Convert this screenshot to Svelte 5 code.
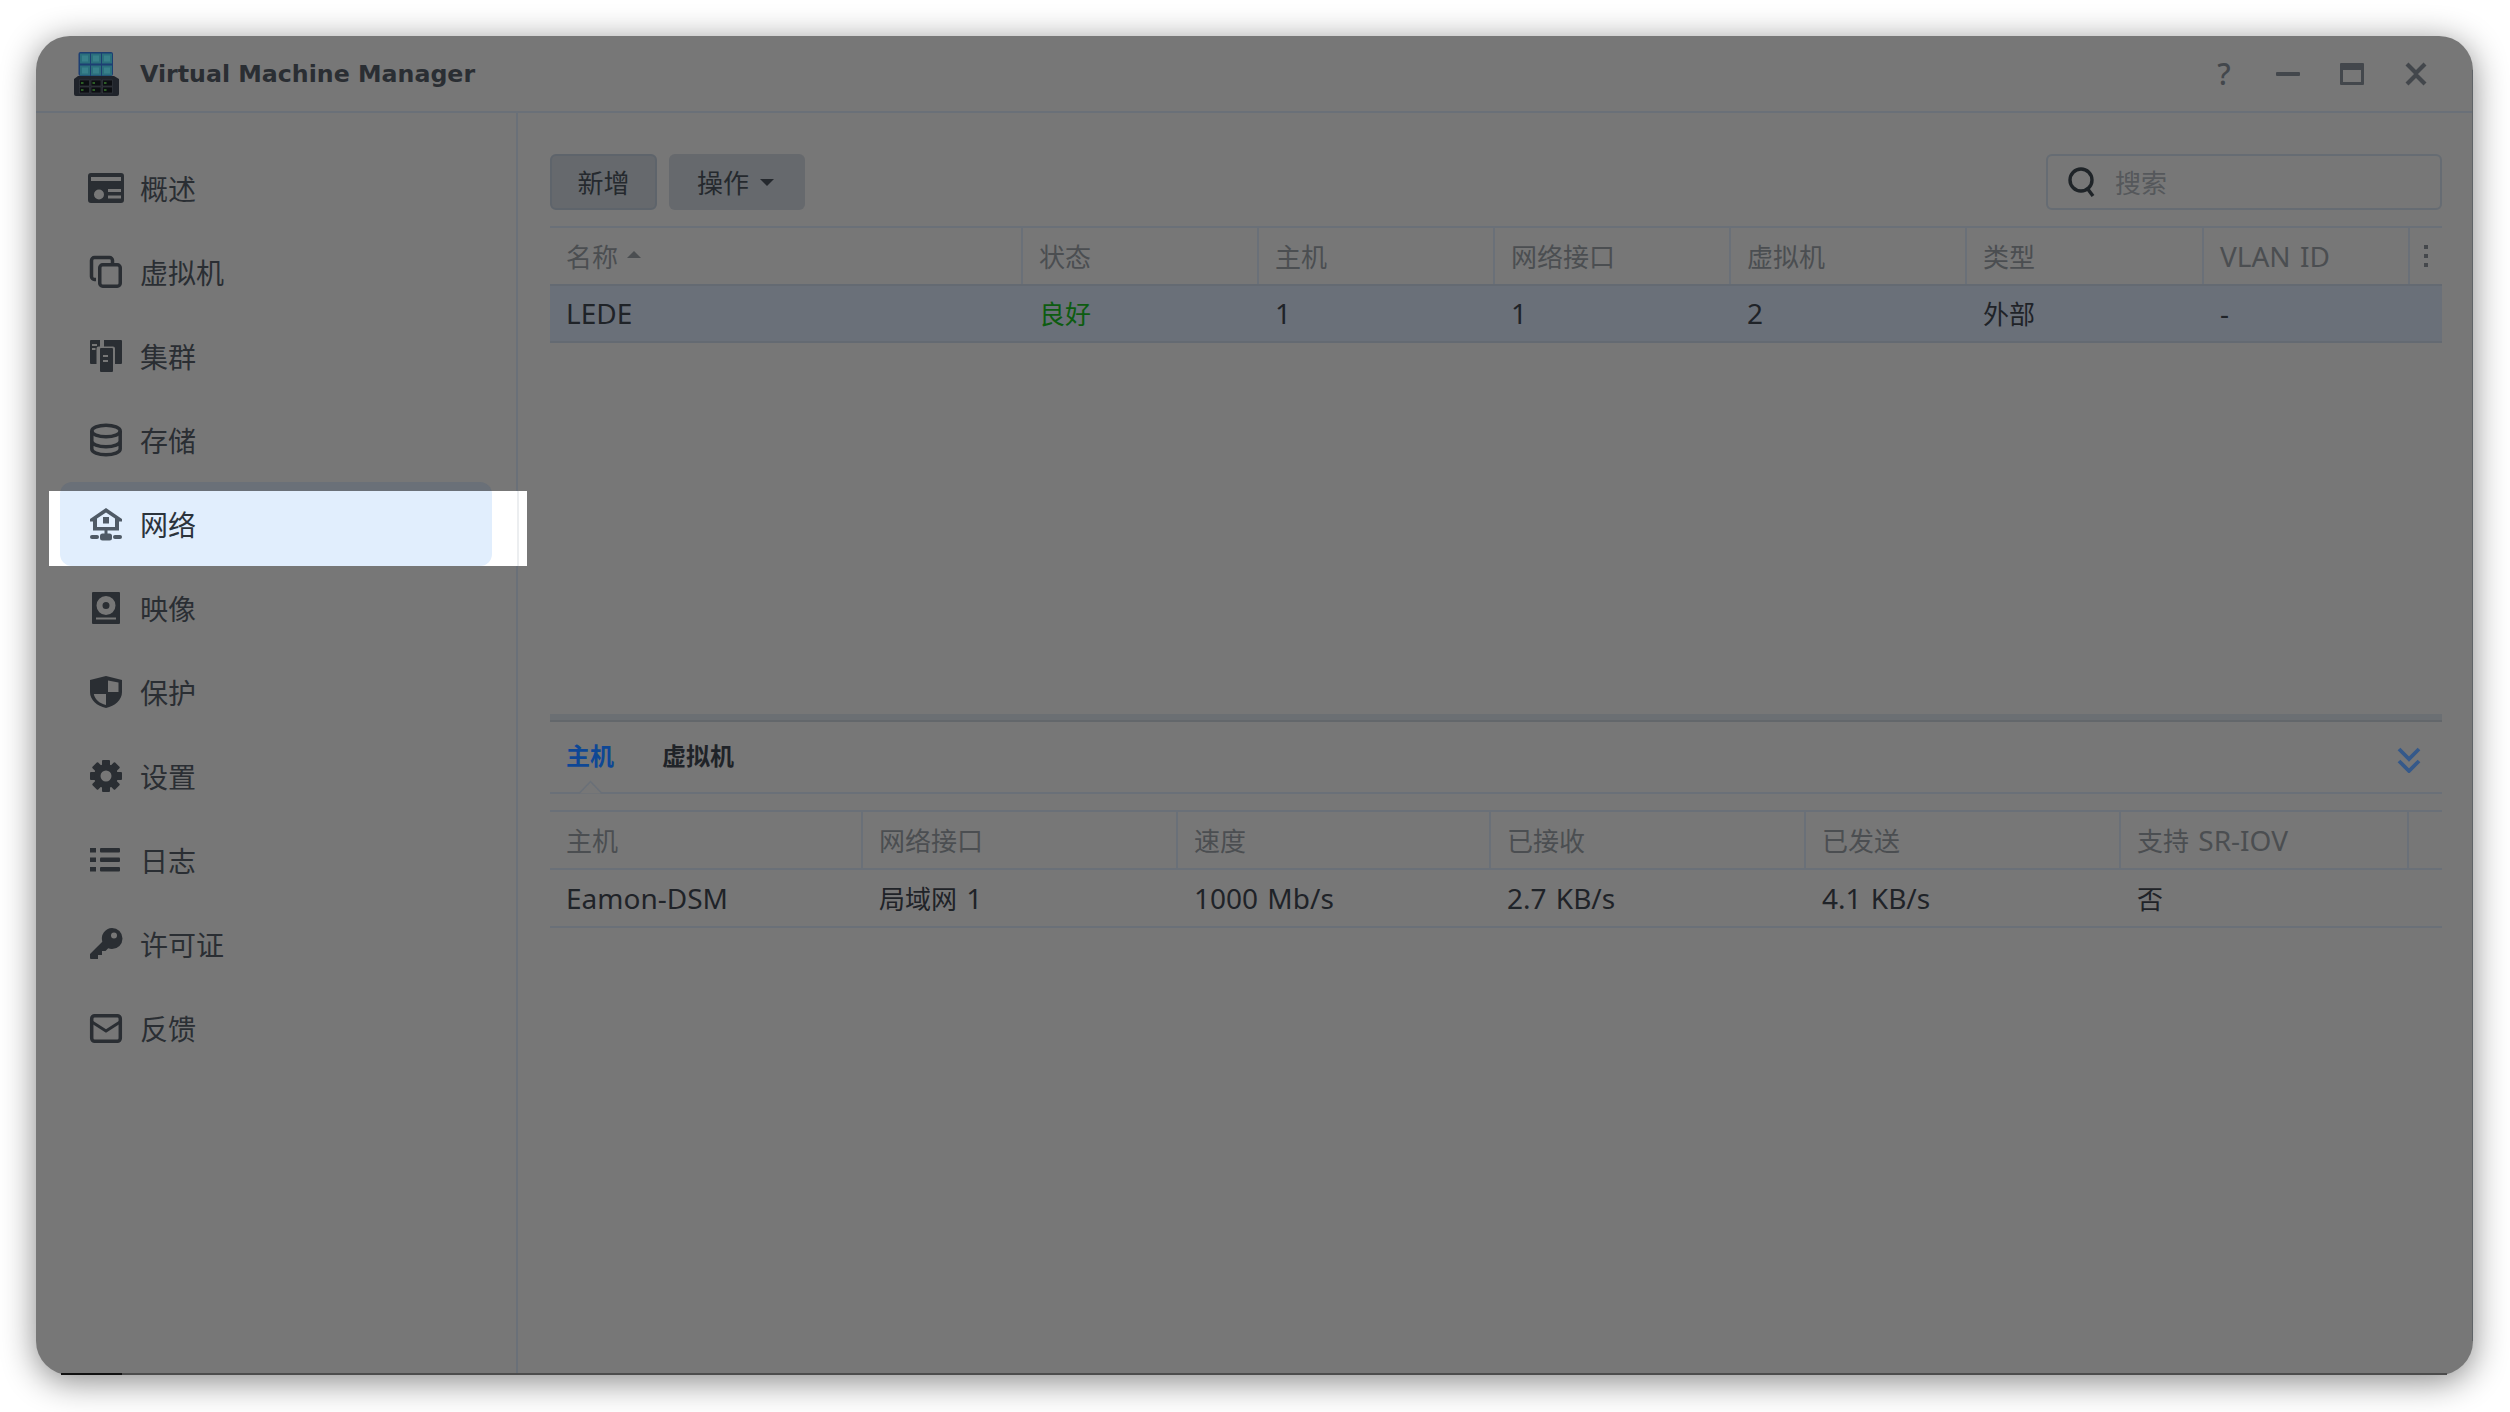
<script>
  const navItems = [
    { key: 'overview', label: '概述' },
    { key: 'vm', label: '虚拟机' },
    { key: 'cluster', label: '集群' },
    { key: 'storage', label: '存储' },
    { key: 'network', label: '网络', selected: true },
    { key: 'image', label: '映像' },
    { key: 'protect', label: '保护' },
    { key: 'settings', label: '设置' },
    { key: 'log', label: '日志' },
    { key: 'license', label: '许可证' },
    { key: 'feedback', label: '反馈' }
  ];

  const topCols = [
    { label: '名称', w: 473, sort: true },
    { label: '状态', w: 236 },
    { label: '主机', w: 236 },
    { label: '网络接口', w: 236 },
    { label: '虚拟机', w: 236 },
    { label: '类型', w: 237 },
    { label: 'VLAN ID', w: 206 }
  ];
  const topRow = ['LEDE', '良好', '1', '1', '2', '外部', '-'];

  const bottomCols = [
    { label: '主机', w: 313 },
    { label: '网络接口', w: 315 },
    { label: '速度', w: 313 },
    { label: '已接收', w: 315 },
    { label: '已发送', w: 315 },
    { label: '支持 SR-IOV', w: 288 }
  ];
  const bottomRow = ['Eamon-DSM', '局域网 1', '1000 Mb/s', '2.7 KB/s', '4.1 KB/s', '否'];

  // gear outline, 8 teeth
  const teeth = [0, 45, 90, 135, 180, 225, 270, 315];

  // latin runs sit a bit larger than the CJK ones in the tables
  function runs(text) {
    return text.split(/([\x20-\x7e]+)/).filter(Boolean).map((t) => ({ t, latin: /^[\x20-\x7e]+$/.test(t) }));
  }
</script>

<div class="window">
  <header class="titlebar">
    <svg class="logo" viewBox="0 0 45 44" width="45" height="44">
      <rect x="4.5" y="0" width="34.5" height="24" rx="2" fill="#1d3f72" />
      {#each [0, 1] as r}
        {#each [0, 1, 2] as c}
          <rect x={6 + c * 11} y={1.5 + r * 12} width="10" height="10" fill="#2b6f7c" />
          <rect x={8 + c * 11} y={3.5 + r * 12} width="6" height="6" fill="#38808a" />
        {/each}
      {/each}
      <path d="M4 24h36l5 3v15a2 2 0 0 1-2 2H2a2 2 0 0 1-2-2V27z" fill="#20242b" />
      {#each [0, 1] as r}
        {#each [0, 1, 2] as c}
          <rect x={5.5 + c * 11.5} y={28 + r * 7} width="10" height="6" fill="#0c0e12" stroke="#3a3e45" stroke-width="0.6" />
          <rect x={7 + c * 11.5} y={30.5 + r * 7} width="2.5" height="1" fill="#4fae3a" />
        {/each}
      {/each}
    </svg>
    <h1>Virtual Machine Manager</h1>
    <div class="win-buttons">
      <span class="help">?</span>
      <svg width="24" height="24" viewBox="0 0 24 24"><rect x="0" y="10" width="24" height="4" rx="1" /></svg>
      <svg width="24" height="22" viewBox="0 0 24 22"><path fill-rule="evenodd" d="M1 0h22a1 1 0 0 1 1 1v20a1 1 0 0 1-1 1H1a1 1 0 0 1-1-1V1a1 1 0 0 1 1-1zM3 7v12h18V7z" /></svg>
      <svg width="24" height="24" viewBox="0 0 24 24"><path d="M3 2L12 11 21 2M3 22L12 13 21 22M12 12" fill="none" stroke="#43474c" stroke-width="4.2" /></svg>
    </div>
  </header>

  <div class="body">
    <nav class="sidebar">
      <ul>
        {#each navItems as item}
          <li class:selected={item.selected}>
            {#if item.selected}
              <div class="spot"><div class="spot-fill"></div></div>
            {/if}
            <svg class="nav-icon" viewBox="0 0 36 36" width="36" height="36">
              {#if item.key === 'overview'}
                <path fill-rule="evenodd" d="M3 3h30a3 3 0 0 1 3 3v24a3 3 0 0 1-3 3H3a3 3 0 0 1-3-3V6a3 3 0 0 1 3-3zM3 7v4h30V7zM11 19.5a5 5 0 1 0 0 10a5 5 0 0 0 0-10zM20 19v3h13v-3zM20 25.5v3h13v-3z" />
              {:else if item.key === 'vm'}
                <rect x="11.75" y="10.75" width="20.5" height="21.5" rx="3" class="line" />
                <path class="line" d="M8 25.5H6.5a3 3 0 0 1-3-3V6.5a3 3 0 0 1 3-3h15a3 3 0 0 1 3 3V9" />
              {:else if item.key === 'cluster'}
                <path fill-rule="evenodd" d="M3 2h9v6.5h-1.5a2 2 0 0 0-2 2V26H3a1 1 0 0 1-1-1V3a1 1 0 0 1 1-1zM4 6v2h5V6zM4 10v2h3.5v-2z" />
                <path d="M16 2h17a1 1 0 0 1 1 1v22a1 1 0 0 1-1 1h-6V10.5a2 2 0 0 0-2-2h-9V2z" />
                <path fill-rule="evenodd" d="M13 10h11a1 1 0 0 1 1 1v22a1 1 0 0 1-1 1H13a1 1 0 0 1-1-1V11a1 1 0 0 1 1-1zM15 17v2h5v-2zM15 22v2h5v-2z" />
              {:else if item.key === 'storage'}
                <ellipse cx="18" cy="9" rx="14.2" ry="5.8" class="line" />
                <path class="line" d="M3.8 9v18c0 3.2 6.4 5.8 14.2 5.8S32.2 30.2 32.2 27V9M3.8 19c0 3.2 6.4 5.8 14.2 5.8S32.2 22.2 32.2 19" />
              {:else if item.key === 'network'}
                <path class="accent" fill-rule="evenodd" d="M18 2l16 11v2.5h-3v9H5v-9H2V13zM9 12.5V21h18v-8.500L18 6.500zM15 11h6v6.500h-6z" />
                <rect class="accent" x="16.500" y="24" width="3" height="4" />
                <rect class="accent" x="2" y="29" width="9" height="4" rx="2" />
                <rect class="accent" x="25" y="29" width="9" height="4" rx="2" />
                <rect class="accent" x="12" y="27.500" width="12" height="7" rx="2.500" />
              {:else if item.key === 'image'}
                <path fill-rule="evenodd" d="M5 2h26a1 1 0 0 1 1 1v30a1 1 0 0 1-1 1H5a1 1 0 0 1-1-1V3a1 1 0 0 1 1-1zM18 6a9.500 9.500 0 1 0 0 19a9.500 9.500 0 0 0 0-19zM18 12a3.500 3.500 0 1 1 0 7a3.500 3.500 0 0 1 0-7zM8 27.500v2h20v-2z" />
              {:else if item.key === 'protect'}
                <path fill-rule="evenodd" d="M18 2l16 4v12c0 8-7 14-16 16C9 32 2 26 2 18V6zM20 6.500V18h10.500V8.500zM18 20H5.800c.8 5 5.500 9.500 12.200 11z" />
              {:else if item.key === 'settings'}
                {#each teeth as a}
                  <rect x="14" y="2" width="8" height="8" rx="1" transform="rotate({a} 18 18)" />
                {/each}
                <path fill-rule="evenodd" d="M18 6a12 12 0 1 0 0 24a12 12 0 0 0 0-24zM18 12.500a5.500 5.500 0 1 1 0 11a5.500 5.500 0 0 1 0-11z" />
              {:else if item.key === 'log'}
                <rect x="2" y="6" width="6" height="4.500" />
                <rect x="2" y="15.500" width="6" height="4.500" />
                <rect x="2" y="25" width="6" height="4.500" />
                <rect x="12" y="6" width="20" height="4.500" rx="1" />
                <rect x="12" y="15.500" width="20" height="4.500" rx="1" />
                <rect x="12" y="25" width="20" height="4.500" rx="1" />
              {:else if item.key === 'license'}
                <path fill-rule="evenodd" d="M24 2a10.500 10.500 0 0 1 0 21c-1.400 0-2.700-.3-3.800-.7L17.500 25h-3.500v4h-4v4H3a1 1 0 0 1-1-1v-4l12.300-12.300A10.500 10.500 0 0 1 24 2zM26 6.500a3 3 0 1 0 0 6a3 3 0 0 0 0-6z" />
              {:else if item.key === 'feedback'}
                <rect x="3.700" y="5.700" width="28.600" height="25.600" rx="3" class="line" />
                <path class="line" d="M4 12l14 9 14-9" style="stroke-width:3" />
              {/if}
            </svg>
            <span class="nav-label">{item.label}</span>
          </li>
        {/each}
      </ul>
    </nav>

    <main class="content">
      <div class="toolbar">
        <button class="btn primary">新增</button>
        <button class="btn actions">操作<i class="caret"></i></button>
        <div class="search">
          <svg width="28" height="30" viewBox="0 0 28 30"><circle cx="13" cy="13" r="11" fill="none" stroke="#1f2428" stroke-width="3.400" /><path d="M19 21l6 8" stroke="#1f2428" stroke-width="3.400" fill="none" /></svg>
          <span>搜索</span>
        </div>
      </div>

      <section class="grid top-grid">
        <div class="head">
          {#each topCols as col}
            <div class="cell" style="width: {col.w}px">
              <span>{#each runs(col.label) as r}<span class:latin={r.latin}>{r.t}</span>{/each}</span>
              {#if col.sort}<i class="sort-up"></i>{/if}
            </div>
          {/each}
          <div class="cell kebab"><b></b><b></b><b></b></div>
        </div>
        <div class="row picked">
          {#each topRow as val, i}
            <div class="cell" class:ok={i === 1} style="width: {topCols[i].w}px">
              <span>{#each runs(val) as r}<span class:latin={r.latin}>{r.t}</span>{/each}</span>
            </div>
          {/each}
        </div>
      </section>

      <div class="splitter"></div>

      <div class="tabs">
        <span class="tab active">主机</span>
        <span class="tab">虚拟机</span>
        <svg class="collapse" width="24" height="26" viewBox="0 0 24 26"><path d="M2 2l10 10L22 2M2 14l10 10 10-10" fill="none" stroke="#35598a" stroke-width="3.800" /></svg>
        <svg class="notch" width="25" height="14" viewBox="0 0 25 14"><path d="M0 13.500h1L12.500 1.500 24 13.500h1" fill="#777" stroke="#6a7078" stroke-width="1.500" /></svg>
      </div>

      <section class="grid bottom-grid">
        <div class="head">
          {#each bottomCols as col}
            <div class="cell" style="width: {col.w}px">
              <span>{#each runs(col.label) as r}<span class:latin={r.latin}>{r.t}</span>{/each}</span>
            </div>
          {/each}
          <div class="cell filler"></div>
        </div>
        <div class="row">
          {#each bottomRow as val, i}
            <div class="cell" style="width: {bottomCols[i].w}px">
              <span>{#each runs(val) as r}<span class:latin={r.latin}>{r.t}</span>{/each}</span>
            </div>
          {/each}
        </div>
      </section>
    </main>
  </div>
</div>

<style>
  :global(body) {
    background: #fff;
    height: 1412px;
    overflow: hidden;
  }

  .window {
    position: relative;
    margin: 36px 0 0 36px;
    width: 2437px;
    height: 1339px;
    background: #777;
    border-radius: 34px;
    box-sizing: border-box;
    box-shadow: 0 6px 34px rgba(0, 0, 0, 0.48);
    display: flex;
    flex-direction: column;
    font-family: "Noto Sans", "Noto Sans CJK SC", sans-serif;
    color: #25292e;
  }
  /* page behind peeks out along the straight edges */
  .window::before {
    content: "";
    position: absolute;
    right: 0;
    top: 34px;
    bottom: 34px;
    width: 1px;
    background: #5e6266;
  }
  .window::after {
    content: "";
    position: absolute;
    left: 25px;
    right: 26px;
    bottom: 0;
    height: 2px;
    background: linear-gradient(to right, #111 0 61px, #4c4c4c 61px);
  }

  .titlebar {
    height: 77px;
    flex: none;
    box-sizing: border-box;
    border-bottom: 2px solid #6a7078;
    display: flex;
    align-items: center;
    padding: 0 45px 0 38px;
  }
  .logo { margin-top: 1px; }
  h1 {
    margin: 1px 0 0 21px;
    font-size: 23.7px;
    font-weight: 700;
    color: #2a2e33;
    font-family: "DejaVu Sans", "Noto Sans CJK SC", sans-serif;
  }
  .win-buttons {
    margin-left: auto;
    display: flex;
    align-items: center;
    gap: 40px;
    fill: #43474c;
  }
  .help {
    font-size: 30px;
    font-weight: 500;
    line-height: 24px;
    color: #43474c;
    width: 24px;
    text-align: center;
  }

  .body {
    flex: 1;
    display: flex;
    min-height: 0;
  }

  .sidebar {
    width: 482px;
    flex: none;
    box-sizing: border-box;
    border-right: 2px solid #6a7078;
    padding: 33px 0 0 24px;
  }
  ul {
    list-style: none;
    margin: 0;
    padding: 0;
    width: 432px;
  }
  li {
    position: relative;
    height: 84px;
    display: flex;
    align-items: center;
    padding-left: 28px;
    gap: 16px;
    font-size: 28px;
    color: #2a2e33;
    fill: #2a2e33;
  }
  .nav-icon, .nav-label {
    position: relative;
  }
  .line {
    fill: none;
    stroke: #2a2e33;
    stroke-width: 3.500;
  }
  .accent { fill: #4f5a66; }

  li.selected {
    background: #6a7078;
    border-radius: 12px;
    color: #2b333b;
  }
  .spot {
    position: absolute;
    left: -11px;
    top: 9px;
    width: 478px;
    bottom: 0;
    background: #fff;
    overflow: hidden;
  }
  .spot::after {
    content: "";
    position: absolute;
    left: 468px;
    top: 0;
    bottom: 0;
    width: 2px;
    background: #eceef0;
  }
  .spot-fill {
    position: absolute;
    left: 11px;
    top: -9px;
    width: 432px;
    bottom: 0;
    background: #e1eefd;
    border-radius: 12px;
  }

  .content {
    flex: 1;
    min-width: 0;
    padding: 41px 31px 0 32px;
    display: flex;
    flex-direction: column;
  }

  .toolbar {
    display: flex;
    gap: 12px;
    height: 56px;
    flex: none;
  }
  .btn {
    height: 56px;
    box-sizing: border-box;
    border: none;
    border-radius: 6px;
    background: #66696d;
    color: #25292e;
    font: inherit;
    font-size: 26px;
    padding: 0;
    display: flex;
    align-items: center;
  }
  .btn.primary {
    width: 107px;
    justify-content: center;
    border: 2px solid #5e646b;
  }
  .btn.actions {
    width: 136px;
    padding-left: 28px;
  }
  .caret {
    display: inline-block;
    margin-left: 11px;
    border: 7px solid transparent;
    border-top-color: #25292e;
    border-bottom: none;
  }
  .search {
    margin-left: auto;
    width: 396px;
    height: 56px;
    box-sizing: border-box;
    border: 2px solid #666c73;
    border-radius: 6px;
    display: flex;
    align-items: center;
    padding: 0 20px;
    gap: 19px;
    font-size: 26px;
    color: #55585b;
  }

  .grid { flex: none; }
  .top-grid { margin-top: 16px; }
  .head, .row {
    display: flex;
    box-sizing: border-box;
  }
  .head {
    height: 58px;
    border-top: 2px solid #6a7078;
    font-size: 26px;
    color: #4b4e51;
  }
  .head .cell {
    border-right: 2px solid #6a7078;
  }
  .cell {
    flex: none;
    box-sizing: border-box;
    padding-left: 16px;
    display: flex;
    align-items: center;
    white-space: pre;
  }
  .latin {
    font-size: 28px;
    word-spacing: 2px;
  }
  .head .cell.kebab {
    flex: 1;
    border-right: none;
    padding: 0;
    flex-direction: column;
    justify-content: center;
    gap: 5px;
  }
  .kebab b {
    width: 4px;
    height: 4px;
    background: #45484c;
  }
  .head .cell.filler {
    flex: 1;
    border-right: none;
  }
  .sort-up {
    margin-left: 9px;
    margin-top: -4px;
    border: 7px solid transparent;
    border-bottom-color: #4b4e51;
    border-top: none;
  }
  .row {
    height: 59px;
    border-top: 2px solid #6a7078;
    border-bottom: 2px solid #6a7078;
    padding-bottom: 1px;
    font-size: 26px;
    color: #1f2328;
  }
  .bottom-grid .row { height: 60px; }
  .row.picked {
    background: #6a7079;
    border-color: #646a72;
  }
  .ok { color: #0d5c10; }

  .splitter {
    flex: none;
    margin-top: 371px;
    height: 8px;
    background: #6b6f73;
    border-bottom: 2px solid #63676b;
    box-sizing: border-box;
  }

  .tabs {
    position: relative;
    flex: none;
    height: 72px;
    box-sizing: border-box;
    border-bottom: 2px solid #6a7078;
    display: flex;
    align-items: center;
    padding: 0 17px 6px 16px;
    gap: 48px;
    font-size: 24px;
    font-weight: 700;
    color: #1f2328;
  }
  .tab.active { color: #0e4795; }
  .collapse {
    margin-left: auto;
    margin-top: 11px;
    margin-right: 4px;
  }
  .notch {
    position: absolute;
    left: 28px;
    bottom: -2px;
  }

  .bottom-grid { margin-top: 16px; }
</style>
